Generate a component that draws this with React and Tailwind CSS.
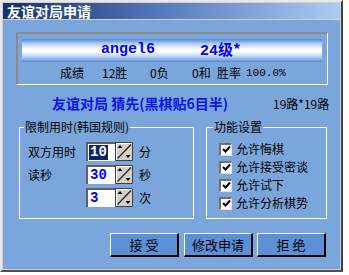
import React from 'react';

const cjk = '"Noto Sans CJK SC", "Liberation Sans", sans-serif';

function Spinner() {
  return (
    <svg width="18" height="19" viewBox="0 0 18 19" className="block shrink-0">
      <rect x="0" y="0" width="18" height="19" fill="#d4d0c8" />
      <path d="M0 0.5H17.5V18.5H0.5V0" fill="none" stroke="#404040" />
      <path d="M1.5 17.5L1.5 1.5L16.5 1.5" fill="none" stroke="#ffffff" />
      <path d="M2.5 16.5L16 2.5" stroke="#202020" strokeWidth="1.2" />
      <path d="M5 3L7.5 6H2.5Z" fill="#000" />
      <path d="M10.5 13H15.5L13 16Z" fill="#000" />
    </svg>
  );
}

function TimeInput({ value, selected }) {
  return (
    <div className="flex h-[19px]">
      <div className="w-[29px] h-[19px] bg-white border-t-2 border-l-2 border-t-[#606060] border-l-[#606060] flex items-center pl-[1px]">
        <span
          className={
            'font-bold text-[14px] leading-[15px] px-[1px] ' +
            (selected ? 'bg-[#0a246a] text-white' : 'text-[#0000ff]')
          }
          style={{ fontFamily: '"Liberation Mono", monospace' }}
        >
          {value}
        </span>
      </div>
      <Spinner />
    </div>
  );
}

function Check({ label }) {
  return (
    <div className="flex items-center h-[18px]">
      <div className="w-[13px] h-[13px] bg-white border-t-2 border-l-2 border-t-[#707070] border-l-[#707070] border-b border-r border-b-[#e0e0e0] border-r-[#e0e0e0] flex items-center justify-center">
        <svg width="9" height="9" viewBox="0 0 9 9">
          <path d="M1 4L3.5 6.5L8 1.5" fill="none" stroke="#000" strokeWidth="2" />
        </svg>
      </div>
      <span className="ml-[4px] text-[12px] leading-[14px] text-black">{label}</span>
    </div>
  );
}

function Btn({ children, className }) {
  return (
    <button
      className={
        'w-[69px] h-[24px] bg-[#5b8fd6] border-t border-l border-white border-b-2 border-r-2 border-b-black border-r-black text-[13px] text-black flex items-center justify-center ' +
        (className || '')
      }
    >
      {children}
    </button>
  );
}

export default function App() {
  return (
    <div className="w-[349px] h-[275px] bg-white" style={{ fontFamily: cjk }}>
      <div className="w-[343px] h-[272px] bg-[#d4d0c8] border-t-2 border-l-2 border-t-[#e8e8e8] border-l-[#e8e8e8] border-r-2 border-b-2 border-r-[#404040] border-b-[#505050] p-px flex flex-col">
        <div className="h-[16px] bg-gradient-to-r from-[#12306f] via-[#5a7fc0] to-[#abcdf3] flex items-center pl-[4px]">
          <span className="text-white font-bold text-[14px] leading-[16px]">友谊对局申请</span>
        </div>
        <div className="flex-1 mt-px bg-[#7ba6dc] flex flex-col">
          <div className="ml-[13px] mt-[12px] w-[312px] h-[53px] border-t-2 border-l-2 border-[#8a8a8a] border-b border-r border-b-white border-r-white pt-[5px] px-[4px] flex flex-col">
            <div className="w-[300px] h-[23px] bg-[linear-gradient(to_bottom,#5289d8_0%,#b8d2f3_22%,#ffffff_45%,#ffffff_55%,#b8d2f3_78%,#5289d8_100%)] flex items-center">
              <span
                className="ml-[79px] w-[99px] text-[#0000ff] font-bold text-[15px]"
                style={{ fontFamily: '"Liberation Mono", monospace' }}
              >
                angel6
              </span>
              <span className="text-[#0000ff] font-bold text-[15px]">
                <span style={{ fontFamily: '"Liberation Mono", monospace' }}>24</span>级*
              </span>
            </div>
            <div className="mt-[3px] h-[16px] flex items-center text-[12px] text-black">
              <span className="ml-[38px] w-[42px]">成绩</span>
              <span className="w-[48px]">12胜</span>
              <span className="w-[42px]">0负</span>
              <span className="w-[25px]">0和</span>
              <span className="w-[29px]">胜率</span>
              <span style={{ fontFamily: '"Liberation Mono", monospace' }} className="text-[11px]">100.0%</span>
            </div>
          </div>

          <div className="mt-[10px] h-[16px] flex items-end">
            <span className="ml-[49px] w-[221px] text-[#0a14f0] font-bold text-[14px] leading-[16px]">
              友谊对局 猜先(黑棋贴6目半)
            </span>
            <span className="text-[12px] leading-[14px] text-black">19路*19路</span>
          </div>

          <div className="mt-[8px] flex items-start">
            <fieldset className="ml-[16px] w-[175px] h-[100px] border border-white px-0">
              <legend className="ml-[4px] px-[1px] text-[12px] leading-[16px] text-black">限制用时(韩国规则)</legend>
              <div className="pt-[7px] pl-[8px] flex flex-col gap-[4px]">
                <div className="flex items-center">
                  <span className="w-[58px] text-[12px] text-black">双方用时</span>
                  <TimeInput value="10" selected />
                  <span className="ml-[6px] text-[12px] text-black">分</span>
                </div>
                <div className="flex items-center">
                  <span className="w-[58px] text-[12px] text-black">读秒</span>
                  <TimeInput value="30" />
                  <span className="ml-[6px] text-[12px] text-black">秒</span>
                </div>
                <div className="flex items-center">
                  <span className="w-[58px]" />
                  <TimeInput value="3" />
                  <span className="ml-[6px] text-[12px] text-black">次</span>
                </div>
              </div>
            </fieldset>
            <fieldset className="ml-[12px] w-[121px] h-[100px] border border-white px-0">
              <legend className="ml-[6px] px-[1px] text-[12px] leading-[16px] text-black">功能设置</legend>
              <div className="pt-[5px] pl-[12px] flex flex-col">
                <Check label="允许悔棋" />
                <Check label="允许接受密谈" />
                <Check label="允许试下" />
                <Check label="允许分析棋势" />
              </div>
            </fieldset>
          </div>

          <div className="mt-[14px] flex">
            <Btn className="ml-[107px]">接 受</Btn>
            <Btn className="ml-[5px]">修改申请</Btn>
            <Btn className="ml-[4px]">拒 绝</Btn>
          </div>
        </div>
      </div>
    </div>
  );
}
